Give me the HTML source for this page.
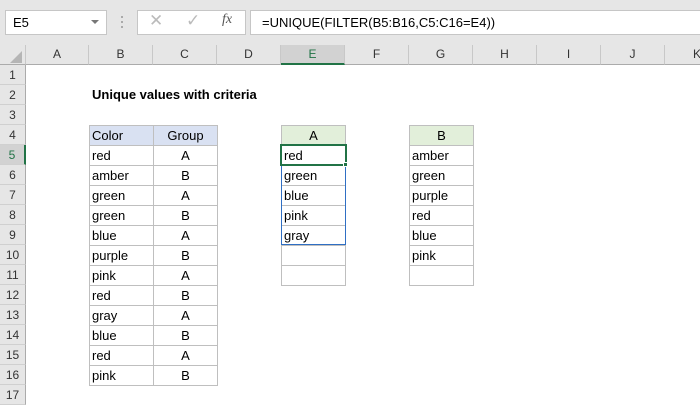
<!DOCTYPE html><html><head><style>
body{margin:0;width:700px;height:400px;overflow:hidden;background:#fff;font-family:"Liberation Sans",Arial,sans-serif;position:relative}
.a{position:absolute;box-sizing:border-box}
.ch{top:45px;height:20px;background:#e6e6e6;border-right:1px solid #c8c8c8;border-bottom:1px solid #ababab;font-size:12px;color:#333;text-align:center;line-height:19px}
.rh{left:0;width:26px;height:20px;background:#e6e6e6;border-bottom:1px solid #d0d0d0;border-right:1px solid #ababab;font-size:12px;color:#333;text-align:center;line-height:20px}
.c{height:21px;border:1px solid #bfbfbf;font-size:13px;line-height:19px;padding-left:2px;color:#000}
.ctr{text-align:center;padding-left:0}
</style></head><body>
<div class="a" style="left:0;top:0;width:700px;height:45px;background:#e6e6e6"></div>
<div class="a" style="left:5px;top:10px;width:102px;height:25px;background:#fff;border:1px solid #c6c6c6;font-size:13px;line-height:23px;padding-left:7px">E5</div>
<div class="a" style="left:91px;top:20px;width:0;height:0;border-left:4px solid transparent;border-right:4px solid transparent;border-top:4px solid #777"></div>
<div class="a" style="left:121px;top:16px;width:2px;height:2px;background:#aaa;box-shadow:0 5px #aaa,0 10px #aaa"></div>
<div class="a" style="left:137px;top:10px;width:109px;height:25px;background:#fff;border:1px solid #c6c6c6"></div>
<div class="a" style="left:149px;top:11px;font-size:17px;color:#bbb">✕</div>
<div class="a" style="left:186px;top:11px;font-size:17px;color:#bbb">✓</div>
<div class="a" style="left:222px;top:12px;font-size:14px;font-style:italic;font-family:'Liberation Serif',serif;color:#555">fx</div>
<div class="a" style="left:250px;top:10px;width:450px;height:25px;background:#fff;border:1px solid #c6c6c6;border-right:none;font-size:13px;line-height:23px;padding-left:11px">=UNIQUE(FILTER(B5:B16,C5:C16=E4))</div>
<div class="a ch" style="left:0;width:26px"></div>
<div class="a" style="left:10px;top:51px;width:0;height:0;border-left:12px solid transparent;border-bottom:12px solid #b5b5b5"></div>
<div class="a ch" style="left:26px;width:63px">A</div>
<div class="a ch" style="left:89px;width:64px">B</div>
<div class="a ch" style="left:153px;width:64px">C</div>
<div class="a ch" style="left:217px;width:64px">D</div>
<div class="a ch" style="left:281px;width:64px;background:#d2d2d2;color:#217346;border-bottom:2px solid #217346">E</div>
<div class="a ch" style="left:345px;width:64px">F</div>
<div class="a ch" style="left:409px;width:64px">G</div>
<div class="a ch" style="left:473px;width:64px">H</div>
<div class="a ch" style="left:537px;width:64px">I</div>
<div class="a ch" style="left:601px;width:64px">J</div>
<div class="a ch" style="left:665px;width:40px;text-align:left;padding-left:28px">K</div>
<div class="a rh" style="top:65px">1</div><div class="a rh" style="top:85px">2</div><div class="a rh" style="top:105px">3</div><div class="a rh" style="top:125px">4</div>
<div class="a rh" style="top:145px;background:#d2d2d2;color:#217346;border-right:2px solid #217346">5</div>
<div class="a rh" style="top:165px">6</div><div class="a rh" style="top:185px">7</div><div class="a rh" style="top:205px">8</div><div class="a rh" style="top:225px">9</div><div class="a rh" style="top:245px">10</div><div class="a rh" style="top:265px">11</div><div class="a rh" style="top:285px">12</div><div class="a rh" style="top:305px">13</div><div class="a rh" style="top:325px">14</div><div class="a rh" style="top:345px">15</div><div class="a rh" style="top:365px">16</div><div class="a rh" style="top:385px">17</div>
<div class="a" style="left:92px;top:87px;font-size:13px;font-weight:bold">Unique values with criteria</div>
<div class="a c" style="left:89px;top:125px;width:65px;background:#d9e1f2">Color</div><div class="a c ctr" style="left:153px;top:125px;width:65px;background:#d9e1f2">Group</div>
<div class="a c" style="left:89px;top:145px;width:65px">red</div><div class="a c ctr" style="left:153px;top:145px;width:65px">A</div>
<div class="a c" style="left:89px;top:165px;width:65px">amber</div><div class="a c ctr" style="left:153px;top:165px;width:65px">B</div>
<div class="a c" style="left:89px;top:185px;width:65px">green</div><div class="a c ctr" style="left:153px;top:185px;width:65px">A</div>
<div class="a c" style="left:89px;top:205px;width:65px">green</div><div class="a c ctr" style="left:153px;top:205px;width:65px">B</div>
<div class="a c" style="left:89px;top:225px;width:65px">blue</div><div class="a c ctr" style="left:153px;top:225px;width:65px">A</div>
<div class="a c" style="left:89px;top:245px;width:65px">purple</div><div class="a c ctr" style="left:153px;top:245px;width:65px">B</div>
<div class="a c" style="left:89px;top:265px;width:65px">pink</div><div class="a c ctr" style="left:153px;top:265px;width:65px">A</div>
<div class="a c" style="left:89px;top:285px;width:65px">red</div><div class="a c ctr" style="left:153px;top:285px;width:65px">B</div>
<div class="a c" style="left:89px;top:305px;width:65px">gray</div><div class="a c ctr" style="left:153px;top:305px;width:65px">A</div>
<div class="a c" style="left:89px;top:325px;width:65px">blue</div><div class="a c ctr" style="left:153px;top:325px;width:65px">B</div>
<div class="a c" style="left:89px;top:345px;width:65px">red</div><div class="a c ctr" style="left:153px;top:345px;width:65px">A</div>
<div class="a c" style="left:89px;top:365px;width:65px">pink</div><div class="a c ctr" style="left:153px;top:365px;width:65px">B</div>
<div class="a c ctr" style="left:281px;top:125px;width:65px;background:#e2efda">A</div>
<div class="a c" style="left:281px;top:145px;width:65px">red</div>
<div class="a c" style="left:281px;top:165px;width:65px">green</div>
<div class="a c" style="left:281px;top:185px;width:65px">blue</div>
<div class="a c" style="left:281px;top:205px;width:65px">pink</div>
<div class="a c" style="left:281px;top:225px;width:65px">gray</div>
<div class="a c" style="left:281px;top:245px;width:65px"></div>
<div class="a c" style="left:281px;top:265px;width:65px"></div>
<div class="a" style="left:281px;top:145px;width:65px;height:100px;border:1px solid #2f6fc4"></div>
<div class="a" style="left:280px;top:144px;width:67px;height:22px;border:2px solid #217346"></div>
<div class="a" style="left:343px;top:162px;width:5px;height:5px;background:#217346;border:1px solid #fff"></div>
<div class="a c ctr" style="left:409px;top:125px;width:65px;background:#e2efda">B</div>
<div class="a c" style="left:409px;top:145px;width:65px">amber</div>
<div class="a c" style="left:409px;top:165px;width:65px">green</div>
<div class="a c" style="left:409px;top:185px;width:65px">purple</div>
<div class="a c" style="left:409px;top:205px;width:65px">red</div>
<div class="a c" style="left:409px;top:225px;width:65px">blue</div>
<div class="a c" style="left:409px;top:245px;width:65px">pink</div>
<div class="a c" style="left:409px;top:265px;width:65px"></div>
</body></html>
